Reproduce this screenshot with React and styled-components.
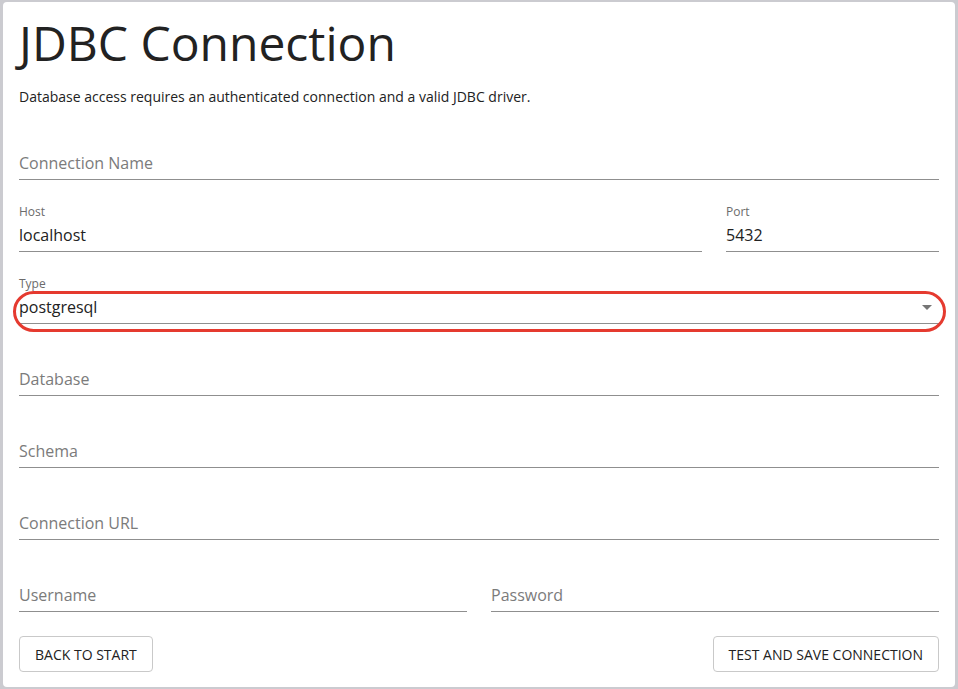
import React from "react";
import styled, { createGlobalStyle } from "styled-components";

const Global = createGlobalStyle`
  html, body { margin: 0; padding: 0; background: #cbcbd0; }
  body { font-family: "Open Sans", "Noto Sans", sans-serif; }
  * { box-sizing: border-box; }
`;

const Card = styled.div`
  margin: 2px 3px 2px 3px;
  width: 952px;
  height: 685px;
  background: #fff;
  border-radius: 4px;
  padding: 0 16px 15px 16px;
  display: flex;
  flex-direction: column;
`;

const Title = styled.h1`
  margin: 13px 0 0 0;
  font-size: 48px;
  font-weight: 400;
  line-height: 56px;
  color: #222;
  letter-spacing: 0;
`;

const Subtitle = styled.p`
  margin: 16px 0 0 0;
  font-size: 14px;
  line-height: 20px;
  color: #222;
`;

const Form = styled.div`
  margin-top: 25px;
  display: flex;
  flex-direction: column;
  gap: 24px;
`;

const Row = styled.div`
  display: flex;
  gap: 24px;
`;

const Field = styled.div`
  position: relative;
  flex: ${(p) => p.$flex || 1} 1 0;
  display: flex;
  flex-direction: column;
`;

const Label = styled.div`
  height: 16px;
  font-size: 12px;
  line-height: 16px;
  color: #6b6b6b;
`;

const InputBox = styled.div`
  height: 32px;
  padding: 4px 0 5px 0;
  border-bottom: 1px solid #8f8f8f;
  font-size: 16px;
  line-height: 23px;
  color: ${(p) => (p.$placeholder ? "#7b7b7b" : "#222")};
  display: flex;
  align-items: center;
  justify-content: space-between;
`;

const Arrow = styled.svg`
  width: 24px;
  height: 24px;
  margin-right: 0;
  fill: #757575;
`;

const Highlight = styled.div`
  position: absolute;
  left: -6px;
  right: -7px;
  top: 15px;
  bottom: -8px;
  border: 3px solid #e53a2f;
  border-radius: 21px;
  pointer-events: none;
`;

const Actions = styled.div`
  margin-top: auto;
  display: flex;
  justify-content: space-between;
`;

const Button = styled.button`
  height: 36px;
  padding: 0 15px;
  background: #fff;
  border: 1px solid #c9c9c9;
  border-radius: 4px;
  font-family: "Open Sans", "Noto Sans", sans-serif;
  font-size: 14px;
  color: #222;
  text-transform: uppercase;
  cursor: pointer;
`;

function TextField({ label, value, placeholder, flex, select, highlight }) {
  return (
    <Field $flex={flex}>
      <Label>{label}</Label>
      <InputBox $placeholder={!value}>
        <span>{value || placeholder}</span>
        {select && (
          <Arrow viewBox="0 0 24 24">
            <path d="M7 10l5 5 5-5z" />
          </Arrow>
        )}
      </InputBox>
      {highlight && <Highlight />}
    </Field>
  );
}

export default function App() {
  return (
    <>
      <Global />
      <Card>
        <Title>JDBC Connection</Title>
        <Subtitle>
          Database access requires an authenticated connection and a valid JDBC driver.
        </Subtitle>
        <Form>
          <TextField placeholder="Connection Name" />
          <Row>
            <TextField label="Host" value="localhost" flex={683} />
            <TextField label="Port" value="5432" flex={213} />
          </Row>
          <TextField label="Type" value="postgresql" select highlight />
          <TextField placeholder="Database" />
          <TextField placeholder="Schema" />
          <TextField placeholder="Connection URL" />
          <Row>
            <TextField placeholder="Username" />
            <TextField placeholder="Password" />
          </Row>
        </Form>
        <Actions>
          <Button>Back to start</Button>
          <Button>Test and save connection</Button>
        </Actions>
      </Card>
    </>
  );
}
